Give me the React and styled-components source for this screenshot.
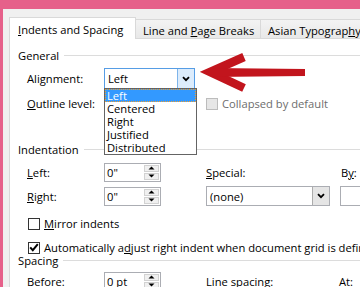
import React from "react";
import styled, { createGlobalStyle } from "styled-components";

const GlobalStyle = createGlobalStyle`
  html, body {
    margin: 0;
    padding: 0;
    background: #f0f0f0;
    overflow: hidden;
  }
`;

const Screen = styled.div`
  position: relative;
  width: 360px;
  height: 287px;
  overflow: hidden;
  box-sizing: border-box;
  border-top: 9px solid #e6608a;
  border-left: 3px solid #e6608a;
  background: #f0f0f0;
  font-family: "Open Sans", "Liberation Sans", sans-serif;
  font-size: 11.2px;
  color: #000;
`;

const Dialog = styled.div`
  width: 480px;
  height: 320px;
  box-sizing: border-box;
  padding: 8px 0 0 6px;
  background: #f0f0f0;
`;

const TabStrip = styled.div`
  display: flex;
  align-items: flex-end;
  height: 21px;
  position: relative;
  z-index: 1;
`;

const Tab = styled.div`
  flex: none;
  width: ${(p) => p.$w}px;
  height: ${(p) => (p.$active ? 22 : 19)}px;
  margin-bottom: ${(p) => (p.$active ? -1 : 0)}px;
  margin-left: ${(p) => (p.$first ? 0 : -1)}px;
  box-sizing: border-box;
  padding: 2px 0 0 ${(p) => (p.$active ? 8 : 7)}px;
  display: flex;
  align-items: center;
  white-space: nowrap;
  border: 1px solid #d9d9d9;
  border-bottom: none;
  background: ${(p) => (p.$active ? "#ffffff" : "linear-gradient(#f3f3f3, #e8e8e8)")};
`;

const Panel = styled.div`
  height: 400px;
  box-sizing: border-box;
  padding: 9px 0 0 8px;
  background: #ffffff;
  border: 1px solid #d9d9d9;
`;

const Legend = styled.div`
  display: flex;
  align-items: center;
  height: 14px;
  margin-top: ${(p) => p.$mt || 0}px;
  &::after {
    content: "";
    flex: 1;
    height: 1px;
    margin-left: 5px;
    background: #dcdcdc;
  }
`;

const Row = styled.div`
  position: relative;
  display: flex;
  align-items: center;
  height: ${(p) => p.$h}px;
  margin-top: ${(p) => p.$mt}px;
  padding-left: 9px;
  white-space: nowrap;
`;

const Label = styled.span`
  flex: none;
  width: ${(p) => (p.$w ? `${p.$w}px` : "auto")};
  padding-left: ${(p) => p.$pl || 0}px;
  box-sizing: border-box;
  color: ${(p) => (p.$disabled ? "#6d6d6d" : "#000")};
`;

const Spacer = styled.span`
  flex: none;
  width: ${(p) => p.$w}px;
`;

const U = styled.span`
  text-decoration: underline;
`;

const Spin = styled.div`
  flex: none;
  display: flex;
  width: 57px;
  height: 19px;
  box-sizing: border-box;
  border: 1px solid #abadb3;
  background: #fff;
`;

const SpinValue = styled.div`
  flex: 1;
  display: flex;
  align-items: center;
  padding-left: 2px;
`;

const SpinButtons = styled.div`
  width: 16px;
  display: flex;
  flex-direction: column;
  padding: 1px 1px 1px 0;
  gap: 1px;
  box-sizing: border-box;
`;

const SpinButton = styled.div`
  flex: 1;
  display: flex;
  align-items: center;
  justify-content: center;
  background: #f0f0f0;
  border: 1px solid #d2d2d2;
  box-sizing: border-box;
`;

const Combo = styled.div`
  position: relative;
  flex: none;
  display: flex;
  width: ${(p) => p.$w}px;
  height: ${(p) => p.$h}px;
  box-sizing: border-box;
  border: 1px solid ${(p) => (p.$focus ? "#569de5" : "#abadb3")};
  background: #fff;
`;

const ComboText = styled.div`
  flex: 1;
  display: flex;
  align-items: center;
  padding-left: 3px;
`;

const ComboButton = styled.div`
  width: 16px;
  display: flex;
  align-items: center;
  justify-content: center;
  border-left: 1px solid ${(p) => (p.$focus ? "#7eb4ea" : "#acacac")};
  background: ${(p) => (p.$focus ? "#dcecfc" : "#e5e5e5")};
`;

const List = styled.div`
  position: absolute;
  top: 100%;
  left: -1px;
  width: 93px;
  box-sizing: border-box;
  border: 1px solid #646464;
  background: #fff;
  z-index: 3;
`;

const ListItem = styled.div`
  height: 13px;
  line-height: 13px;
  padding-left: 2px;
  box-sizing: border-box;
  color: ${(p) => (p.$selected ? "#fff" : "#000")};
  background: ${(p) => (p.$selected ? "#3399ff" : "transparent")};
  outline: ${(p) => (p.$selected ? "1px dotted #f0a030" : "none")};
  outline-offset: -1px;
`;

const Check = styled.span`
  flex: none;
  width: 12px;
  height: 12px;
  margin: 0 4px 0 ${(p) => p.$ml || 0}px;
  box-sizing: border-box;
  display: flex;
  align-items: center;
  justify-content: center;
  border: 1px solid ${(p) => (p.$disabled ? "#bcbcbc" : "#333")};
  background: ${(p) => (p.$disabled ? "#e6e6e6" : "#fff")};
`;

const Arrow = styled.svg`
  position: absolute;
  left: 197px;
  top: 41px;
  z-index: 4;
`;

const Chevron = () => (
  <svg width="8" height="6" viewBox="0 0 8 6">
    <path d="M1 1.2 L4 4.2 L7 1.2" fill="none" stroke="#000" strokeWidth="1.8" />
  </svg>
);

const Tri = ({ down }) => (
  <svg width="7" height="4" viewBox="0 0 7 4">
    <path d={down ? "M0.5 0.5 H6.5 L3.5 3.5 Z" : "M0.5 3.5 H6.5 L3.5 0.5 Z"} fill="#000" />
  </svg>
);

const SpinBox = ({ value }) => (
  <Spin>
    <SpinValue>{value}</SpinValue>
    <SpinButtons>
      <SpinButton>
        <Tri />
      </SpinButton>
      <SpinButton>
        <Tri down />
      </SpinButton>
    </SpinButtons>
  </Spin>
);

const alignments = ["Left", "Centered", "Right", "Justified", "Distributed"];

export default function App() {
  return (
    <Screen>
      <GlobalStyle />
      <Dialog>
        <TabStrip>
          <Tab $active $first $w={127}>
            <span>
              <U>I</U>ndents and Spacing
            </span>
          </Tab>
          <Tab $w={126}>
            <span>
              Line and <U>P</U>age Breaks
            </span>
          </Tab>
          <Tab $w={110}>
            <span>
              Asian Typograp<U>h</U>y
            </span>
          </Tab>
        </TabStrip>
        <Panel>
          <Legend>General</Legend>
          <Row $h={21} $mt={6}>
            <Label $w={77}>
              Ali<U>g</U>nment:
            </Label>
            <Combo $w={91} $h={21} $focus>
              <ComboText>Left</ComboText>
              <ComboButton $focus>
                <Chevron />
              </ComboButton>
              <List>
                {alignments.map((a, i) => (
                  <ListItem key={a} $selected={i === 0}>
                    {a}
                  </ListItem>
                ))}
              </List>
            </Combo>
          </Row>
          <Row $h={21} $mt={4}>
            <Label $w={77}>
              <U>O</U>utline level:
            </Label>
            <Combo $w={91} $h={21} />
            <Spacer $w={11} />
            <Check $disabled />
            <Label $disabled>Collapsed by default</Label>
          </Row>
          <Legend $mt={28}>Indentation</Legend>
          <Row $h={20} $mt={6}>
            <Label $w={77}>
              <U>L</U>eft:
            </Label>
            <SpinBox value={'0"'} />
            <Spacer $w={45} />
            <Label $w={134}>
              <U>S</U>pecial:
            </Label>
            <Label $pl={1}>
              B<U>y</U>:
            </Label>
          </Row>
          <Row $h={20} $mt={4}>
            <Label $w={77}>
              <U>R</U>ight:
            </Label>
            <SpinBox value={'0"'} />
            <Spacer $w={45} />
            <Combo $w={124} $h={20}>
              <ComboText>(none)</ComboText>
              <ComboButton>
                <Chevron />
              </ComboButton>
            </Combo>
            <Spacer $w={10} />
            <Combo $w={70} $h={20} />
          </Row>
          <Row $h={13} $mt={11}>
            <Check $ml={1} />
            <span>
              <U>M</U>irror indents
            </span>
          </Row>
          <Row $h={13} $mt={11}>
            <Check $ml={1}>
              <svg width="10" height="9" viewBox="0 0 10 9">
                <path d="M1.2 4.4 L3.8 7.2 L8.8 1.2" fill="none" stroke="#000" strokeWidth="2" />
              </svg>
            </Check>
            <span>
              Automatically a<U>d</U>just right indent when document grid is defined
            </span>
          </Row>
          <Legend $mt={-1}>Spacing</Legend>
          <Row $h={20} $mt={4}>
            <Label $w={77}>
              <U>B</U>efore:
            </Label>
            <SpinBox value="0 pt" />
            <Spacer $w={45} />
            <Label $w={133}>
              Li<U>n</U>e spacing:
            </Label>
            <Label>
              <U>A</U>t:
            </Label>
          </Row>
        </Panel>
      </Dialog>
      <Arrow width="112" height="45" viewBox="200 50 112 45">
        <path d="M244 57 L210 72 L244 88" fill="none" stroke="#c2151d" strokeWidth="8.5" strokeLinejoin="miter" />
        <path d="M212 68 L305 69 L305 76 L212 77 Z" fill="#c2151d" />
      </Arrow>
    </Screen>
  );
}
